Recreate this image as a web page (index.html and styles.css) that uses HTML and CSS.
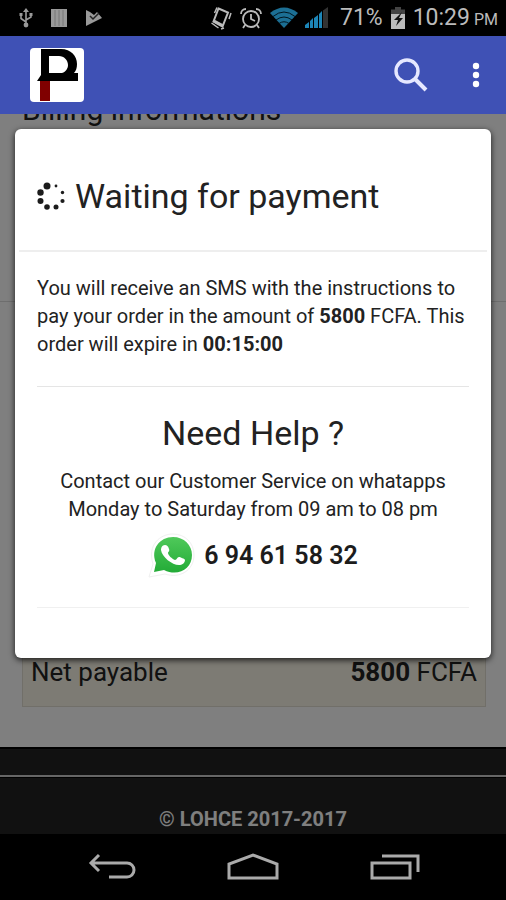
FILE: index.html
```html
<!DOCTYPE html>
<html lang="en">
<head>
  <meta charset="UTF-8">
  <meta name="viewport" content="width=device-width, initial-scale=1.0">
  <title>Waiting for payment</title>
  <link rel="stylesheet" href="styles.css">
</head>
<body>
  <!-- Status bar -->
  <div class="status-bar">
    <div class="status-left">
      <svg width="14" height="20" viewBox="0 0 14 20" fill="none" stroke="#999" stroke-width="1.6">
        <path d="M7 2v14M2 7v3.5l5 3.5M12 6.5V9l-5 3"/>
        <path d="M7 0l3 4H4z" fill="#999" stroke="none"/>
        <circle cx="7" cy="17" r="2.4" fill="#999" stroke="none"/>
        <path d="M.5 5h3v3h-3zM10.500 5h3v3h-3z" fill="#999" stroke="none"/>
      </svg>
      <svg width="16" height="18" viewBox="0 0 16 18">
        <path d="M0 0h16v18H0z" fill="#999"/>
        <path d="M4 1v16M8 1v16M12 1v16" stroke="#777"/>
      </svg>
      <svg width="18" height="18" viewBox="0 0 18 18">
        <path d="M1 1l4 2 4 3 3-3 5 6L1 17z" fill="#999"/>
        <path d="M5 7l3 3 6-6" fill="none" stroke="#222" stroke-width="1.500"/>
      </svg>
    </div>
    <div class="status-right">
      <svg width="22" height="24" viewBox="0 0 22 24" fill="none" stroke="#bbb">
        <path d="M8.500 2.500l9.500 4-5.500 14-9-5z" stroke-width="2"/>
        <path d="M4 15l8.500 4.500" stroke-width="3"/>
        <path d="M4.500 7L7 1.500M1.500 17l7 5M19 13l2-6M11 23l3-1" stroke-width="1.500"/>
      </svg>
      <svg width="24" height="22" viewBox="0 0 24 22" fill="none" stroke="#bbb" stroke-width="1.800">
        <circle cx="12" cy="12" r="8"/>
        <path d="M12 7v5l4 2M6 18l-2 3M18 18l2 3"/>
        <path d="M2 7c0-3 2-5 5-5M22 7c0-3-2-5-5-5"/>
      </svg>
      <svg width="28" height="22" viewBox="0 0 28 22" fill="none">
        <path d="M0 6Q14-5 28 6L14 21z" fill="#1c6f94"/>
        <path d="M3 9.500q11-9 22 0M6 13q8-6 16 0M9 16.500q5-3.500 10 0" stroke="#00151f" stroke-width="1"/>
      </svg>
      <svg class="signal" width="24" height="22" viewBox="0 0 24 22">
        <path d="M0 18l4-3v6H0zM5 14l3-3v10H5zM9 11l4-3v13H9zM14 7l3-3v17h-3z" fill="#1d86b8"/>
        <path d="M18 3.500l5-3.500v21h-5z" fill="#333"/>
      </svg>
      <span class="battery-text">71%</span>
      <svg width="16" height="22" viewBox="0 0 16 22">
        <path d="M5 0h6v2.500h4V8H1V2.500h4z" fill="#444"/>
        <path d="M1 7h14v15H1z" fill="#bbb"/>
        <path d="M12 5l-8 8h4l-2 6 7-8H9z" fill="#111"/>
      </svg>
      <span class="clock">10:29<small> PM</small></span>
    </div>
  </div>

  <!-- App bar -->
  <header class="app-bar">
    <svg class="logo" width="54" height="54" viewBox="0 0 54 54">
      <rect width="54" height="54" rx="4" fill="#fff"/>
      <path d="M10 33h10v20H10z" fill="#800000"/>
      <path d="M11 1h20c10 0 16 7 16 15 0 4-1 7-3 9h4v8H7l4-6zM19 8v17h13c4-1 6-5 6-8 0-5-4-9-9-9z" fill="#000" fill-rule="evenodd"/>
    </svg>
    <button class="icon-btn search-btn" aria-label="Search">
      <svg width="34" height="34" viewBox="0 0 34 34" fill="none" stroke="#e6e8ff">
        <circle cx="13" cy="13" r="11" stroke-width="3.400"/>
        <path d="M21 21l11 11" stroke-width="4"/>
      </svg>
    </button>
    <button class="icon-btn" aria-label="More options">
      <svg width="8" height="26" viewBox="0 0 8 26" fill="#fff">
        <circle cx="4" cy="4" r="3.200"/>
        <circle cx="4" cy="13" r="3.200"/>
        <circle cx="4" cy="22" r="3.200"/>
      </svg>
    </button>
  </header>

  <main class="screen">
    <!-- Order page -->
    <div class="page">
      <h2 class="page-title">Billing informations</h2>
      <div class="billing-box"></div>
      <div class="page-fill"></div>
      <div class="total-row">
        <span>Net payable</span>
        <span><strong>5800</strong> FCFA</span>
      </div>
      <footer class="footer">
        <div class="footer-top"></div>
        <div class="footer-copy">© LOHCE 2017-2017</div>
      </footer>
    </div>

    <!-- Payment dialog -->
    <div class="overlay">
      <div class="modal" role="dialog" aria-labelledby="modal-title">
        <div class="modal-header">
          <svg width="28" height="28" viewBox="0 0 28 28" fill="#1c1c1c">
            <circle cx="10" cy="4" r="3.500"/>
            <circle cx="3.500" cy="10.500" r="3.200"/>
            <circle cx="3.500" cy="19" r="3"/>
            <circle cx="10" cy="25" r="2.800"/>
            <circle cx="19" cy="25" r="2.500"/>
            <circle cx="25.500" cy="19" r="2.100"/>
            <circle cx="25.500" cy="10.500" r="1.700"/>
            <circle cx="19" cy="4" r="1.400"/>
          </svg>
          <h1 id="modal-title">Waiting for payment</h1>
        </div>
        <div class="modal-body">
          <p>You will receive an SMS with the instructions to pay your order in the amount of <strong>5800</strong> FCFA. This order will expire in <strong>00:15:00</strong></p>
          <hr>
          <div class="help">
            <h2>Need Help ?</h2>
            <p>Contact our Customer Service on whatapps Monday to Saturday from 09 am to 08 pm</p>
            <a class="phone" href="tel:694615832">
              <svg width="48" height="46" viewBox="0 0 48 46">
                <defs>
                  <linearGradient id="wa" x1="0" y1="0" x2="0" y2="1">
                    <stop offset="0" stop-color="#4fc95a"/>
                    <stop offset="1" stop-color="#23ab37"/>
                  </linearGradient>
                </defs>
                <path d="M1 44l4-13C-1 12 12 1 25 1c12 0 21 9 21 21 0 15-14 24-29 19z" fill="#fff" stroke="#f0f0f0"/>
                <path d="M6 39l2-9C2 16 12 4 25 4c11 0 19 8 19 18 0 14-14 22-28 15z" fill="url(#wa)"/>
                <path d="M17 12c-3 0-4 3-4 5 1 7 11 15 18 15 3 0 6-2 6-5 0-1-5-3-6-3-2 0-2 3-4 3-3-1-7-5-7-7 0-1 2-2 1-4-1-3-2-4-4-4z" fill="#fff"/>
              </svg>
              <strong>6 94 61 58 32</strong>
            </a>
          </div>
          <hr class="last">
        </div>
      </div>
    </div>
  </main>

  <!-- Navigation bar -->
  <nav class="nav-bar">
    <button class="icon-btn" aria-label="Back">
      <svg width="48" height="28" viewBox="0 0 48 28" fill="none" stroke="#aaa" stroke-width="3">
        <path d="M11 2L3 10l8 8M3 10h36a7 7 0 0 1 0 14H21"/>
      </svg>
    </button>
    <button class="icon-btn" aria-label="Home">
      <svg width="52" height="28" viewBox="0 0 52 28" fill="none" stroke="#aaa" stroke-width="3">
        <path d="M2 25V11l24-9 24 9v14z"/>
      </svg>
    </button>
    <button class="icon-btn" aria-label="Recent apps">
      <svg width="50" height="28" viewBox="0 0 50 28" fill="none" stroke="#aaa" stroke-width="3">
        <path d="M2 10h38v15H2zM12 3h36v16"/>
      </svg>
    </button>
  </nav>
</body>
</html>
```

FILE: styles.css
```css
* {
  margin: 0;
  padding: 0;
  box-sizing: border-box;
}

body {
  display: flex;
  flex-direction: column;
  min-height: 100vh;
  font-family: Roboto, sans-serif;
  font-size: 20px;
  line-height: 28px;
  color: #222;
  background: #000;
}

svg {
  display: block;
  flex: none;
}

/* Status bar */
.status-bar {
  display: flex;
  align-items: center;
  justify-content: space-between;
  height: 36px;
  padding: 0 8px 0 19px;
  color: #bbb;
  background: #000;
}

.status-left {
  display: flex;
  align-items: center;
  gap: 18px;
}

.status-right {
  display: flex;
  align-items: center;
  gap: 7px;
  font-size: 23px;
}

.signal {
  margin-right: 4px;
}

.clock small {
  font-size: 16px;
  line-height: 1;
}

/* App bar */
.app-bar {
  display: flex;
  align-items: center;
  height: 78px;
  padding: 0 26px 0 30px;
  background: #3f51b5;
}

.icon-btn {
  border: none;
  background: none;
  cursor: pointer;
}

.search-btn {
  margin-left: auto;
  margin-right: 44px;
}

/* Order page */
.screen {
  display: flex;
  flex: 1;
  position: relative;
  overflow: hidden;
}

.page {
  display: flex;
  flex-direction: column;
  flex: 1;
  background: #fff;
}

.page-title {
  margin: -20px 22px 0;
  font-size: 30px;
  font-weight: 400;
  line-height: 32px;
}

.billing-box {
  height: 176px;
  border-bottom: 1px solid #ddd;
}

.page-fill {
  flex: 1;
}

.total-row {
  display: flex;
  justify-content: space-between;
  margin: 0 20px 40px 22px;
  padding: 18px 8px;
  font-size: 26px;
  line-height: 32px;
  border: 1px solid #e2dfd2;
  background: #faf6e8;
}

.footer {
  background: #222;
}

.footer-top {
  height: 30px;
  border-top: 2px solid #000;
  border-bottom: 2px solid #ccc;
}

.footer-copy {
  padding: 27px 0 1px;
  font-size: 20px;
  font-weight: 700;
  text-align: center;
  color: #fff;
  border-top: 1px solid #000;
}

/* Payment dialog */
.overlay {
  position: absolute;
  inset: 0;
  padding: 15px;
  background: rgba(0, 0, 0, 0.5);
}

.modal {
  border-radius: 6px;
  background: #fff;
  box-shadow: 0 2px 6px rgba(0, 0, 0, 0.8);
}

.modal-header {
  display: flex;
  align-items: center;
  gap: 10px;
  height: 123px;
  margin: 0 4px;
  padding: 12px 18px 0;
  border-bottom: 2px solid #eee;
}

.modal-header h1,
.help h2 {
  font-size: 34px;
  font-weight: 400;
  line-height: 36px;
}

.modal-body {
  padding: 22px;
}

hr {
  margin: 28px 0;
  border: none;
  border-top: 1px solid #e5e5e5;
}

.help {
  text-align: center;
}

.help p {
  margin: 16px 0 10px;
}

.phone {
  display: flex;
  align-items: center;
  justify-content: center;
  gap: 8px;
  font-size: 25px;
  color: #1c1c1c;
  text-decoration: none;
}

.phone strong {
  font-weight: 600;
}

hr.last {
  border-color: #f0f0f0;
}

/* Navigation bar */
.nav-bar {
  display: flex;
  align-items: center;
  justify-content: space-between;
  height: 66px;
  padding: 0 86px 0 88px;
  background: #000;
}
```
